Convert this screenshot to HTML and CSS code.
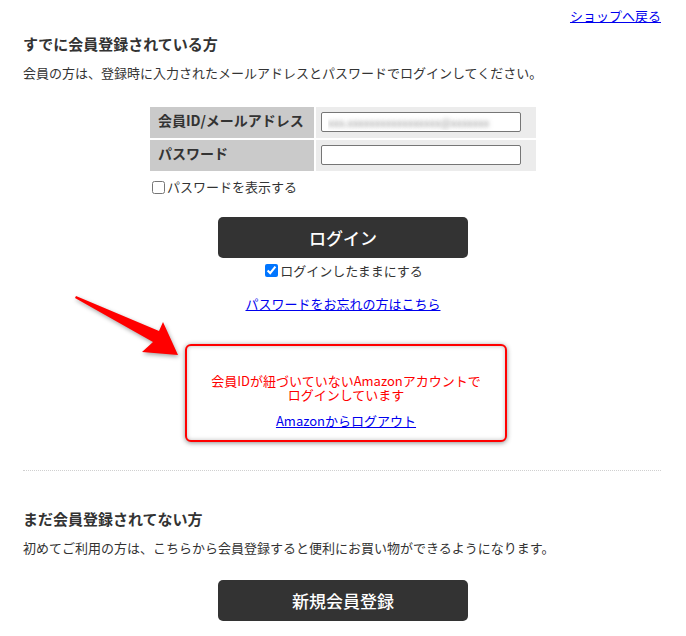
FILE: index.html
```html
<!DOCTYPE html>
<html lang="ja">
<head>
<meta charset="utf-8">
<title>ログイン</title>
<link rel="stylesheet" href="styles.css">
</head>
<body>
<div class="page">
  <div class="top-link"><a href="#">ショップへ戻る</a></div>

  <section class="member">
    <h2 class="heading">すでに会員登録されている方</h2>
    <p class="desc">会員の方は、登録時に入力されたメールアドレスとパスワードでログインしてください。</p>

    <div class="form-wrap">
      <div class="form-grid">
        <div class="label">会員ID/メールアドレス</div>
        <div class="field"><input class="text-input blurred" type="text" value="xxx.xxxxxxxxxxxxxxxxx@xxxxxxx"></div>
        <div class="label">パスワード</div>
        <div class="field"><input class="text-input" type="password"></div>
      </div>
      <label class="check show-pass"><input type="checkbox">パスワードを表示する</label>
    </div>

    <div class="center">
      <button class="btn" type="button">ログイン</button>
    </div>
    <div class="center keep">
      <label class="check"><input type="checkbox" checked>ログインしたままにする</label>
    </div>
    <div class="center forgot"><a href="#">パスワードをお忘れの方はこちら</a></div>

    <div class="notice-row">
      <div class="notice">
        <p class="notice-text">会員IDが紐づいていないAmazonアカウントで<br>ログインしています</p>
        <a href="#" class="notice-link">Amazonからログアウト</a>
      </div>
      <svg class="arrow" width="120" height="80" viewBox="0 0 120 80">
        <polygon points="2,2 85,37 89,28 104,61 68,58 79,48 1,4" fill="#ff0000"/>
      </svg>
    </div>
  </section>

  <hr class="divider">

  <section class="new">
    <h2 class="heading">まだ会員登録されてない方</h2>
    <p class="desc">初めてご利用の方は、こちらから会員登録すると便利にお買い物ができるようになります。</p>
    <div class="center">
      <button class="btn" type="button">新規会員登録</button>
    </div>
  </section>
</div>
</body>
</html>
```

FILE: styles.css
```css
* { box-sizing: border-box; }
html, body { margin: 0; padding: 0; background: #fff; }
body {
  font-family: "Noto Sans CJK JP", "Noto Sans", "Liberation Sans", sans-serif;
  color: #333;
  font-size: 13px;
}
a { color: #0000ee; }
.page { width: 686px; height: 636px; overflow: hidden; padding: 0 23px; }
.top-link { text-align: right; line-height: 20px; padding: 6px 2px 0 0; font-size: 13px; }
.heading { margin: 7px 0 0; font-size: 15px; line-height: 22px; font-weight: bold; color: #333; }
.desc { margin: 8px 0 0; line-height: 20px; font-size: 13px; }
.form-wrap { width: 386px; margin: 24px auto 0; }
.form-grid { display: grid; grid-template-columns: 164px 220px; grid-auto-rows: 31px; gap: 2px; }
.label { background: #cacaca; font-weight: bold; font-size: 14px; line-height: 20px; padding: 3px 0 0 8px; color: #333; }
.field { background: #ececec; padding: 5px 0 0 5px; }
.text-input { display: block; width: 200px; height: 20px; border: 1px solid #767676; border-radius: 2px; background: #fff; padding: 0 6px; font-size: 11px; font-family: inherit; }
.blurred { color: transparent; text-shadow: 0 0 4px rgba(60,60,60,0.55); }
.check { display: inline-flex; align-items: center; line-height: 20px; font-size: 13px; color: #333; }
.check input { margin: 0 2px 0 2px; width: 13px; height: 13px; }
.show-pass { margin-top: 6px; }
.center { text-align: center; }
.btn {
  margin-top: 19px; width: 250px; height: 41px; border: none; border-radius: 5px;
  background: #333; color: #fff; font-family: inherit; font-size: 17px; font-weight: 500; cursor: pointer;
}
.keep { margin-top: 3px; line-height: 20px; }
.forgot { margin-top: 12px; line-height: 20px; }
.notice-row { position: relative; padding-top: 30px; display: flex; justify-content: center; padding-left: 6px; }
.notice {
  width: 322px; height: 98px; border: 2px solid #ff0000; border-radius: 6px;
  box-shadow: 0 1px 5px rgba(0,0,0,0.45), inset 0 0 4px rgba(0,0,0,0.25);
  text-align: center; padding-top: 28px; background: #fff;
}
.notice-text { margin: 0; color: #ff0000; font-size: 13px; line-height: 14px; }
.notice-link { display: inline-block; margin-top: 11px; line-height: 16px; }
.arrow { position: absolute; left: 51px; top: -20px; filter: drop-shadow(1px 2px 2px rgba(0,0,0,0.35)); overflow: visible; }
.divider { border: none; border-top: 1px dotted #d0d0d0; margin: 28px 2px 0 0; height: 0; }
.new .heading { margin-top: 37px; }
.new .btn { margin-top: 22px; }
```
